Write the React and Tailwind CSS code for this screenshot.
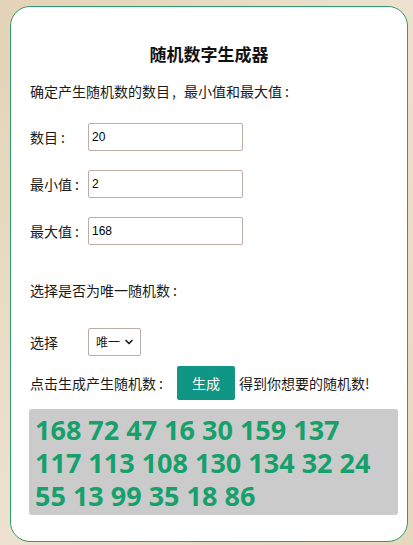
import React from 'react';
import { ChevronDown } from 'lucide-react';

const numbers = [168, 72, 47, 16, 30, 159, 137, 117, 113, 108, 130, 134, 32, 24, 55, 13, 99, 35, 18, 86];

// full-width punctuation, kept 1em wide
const Colon = () => <span className="inline-block w-[1em] text-left pl-[3px]">:</span>;
const Comma = () => <span className="inline-block w-[1em] text-left pl-[2px]">,</span>;

function Field({ label, value }) {
  return (
    <div className="flex items-center h-[28px]">
      <span className="w-[58px] shrink-0">{label}<Colon /></span>
      <div className="w-[155px] h-[28px] border border-[#bcaea5] rounded-[2px] bg-white flex items-center pl-[3px] text-[12px] font-['Liberation_Sans',sans-serif] text-black">
        {value}
      </div>
    </div>
  );
}

export default function App() {
  return (
    <div className="w-[413px] h-[545px] overflow-hidden bg-gradient-to-br from-[#e3d3b6] via-[#ece2cf] to-[#e6d8bd] pt-[6px] pl-[10px] font-['Noto_Sans_CJK_SC',sans-serif] text-[14px] text-[#1a1a1a]">
      <div className="w-[398px] h-[536px] bg-white border border-[#2f9a6a] rounded-[20px] pt-[35px] pl-[19px]">
        {/* Title */}
        <h1 className="text-[17px] leading-[24px] font-bold text-center text-[#111] pr-[19px]">随机数字生成器</h1>

        <p className="mt-[15px] leading-[20px]">确定产生随机数的数目<Comma />最小值和最大值<Colon /></p>

        <div className="mt-[22px] flex flex-col gap-[19px]">
          <Field label="数目" value="20" />
          <Field label="最小值" value="2" />
          <Field label="最大值" value="168" />
        </div>

        <p className="mt-[35px] leading-[20px]">选择是否为唯一随机数<Colon /></p>

        {/* Select */}
        <div className="mt-[28px] flex items-center h-[28px]">
          <span className="w-[58px] shrink-0">选择</span>
          <div className="w-[53px] h-[28px] border border-[#bcaea5] rounded-[2px] flex items-center justify-between pl-[7px] pr-[5px] text-[12px]">
            <span>唯一</span>
            <ChevronDown size={12} strokeWidth={3.5} className="text-[#222]" />
          </div>
        </div>

        {/* Generate row */}
        <div className="mt-[10px] flex items-center h-[34px]">
          <span>点击生成产生随机数<Colon /></span>
          <button className="ml-[7px] w-[58px] h-[34px] bg-[#109684] text-white rounded-[2px] text-[14px]">生成</button>
          <span className="ml-[4px]">得到你想要的随机数!</span>
        </div>

        {/* Output */}
        <div className="mt-[9px] -ml-[1px] w-[369px] h-[106px] bg-[#cbcbcb] rounded-[3px] pt-[4px] pl-[6px] pr-[8px] font-['Open_Sans',sans-serif] font-bold text-[27px] leading-[33px] text-[#17a06b]">
          {numbers.join(' ')}
        </div>
      </div>
    </div>
  );
}
